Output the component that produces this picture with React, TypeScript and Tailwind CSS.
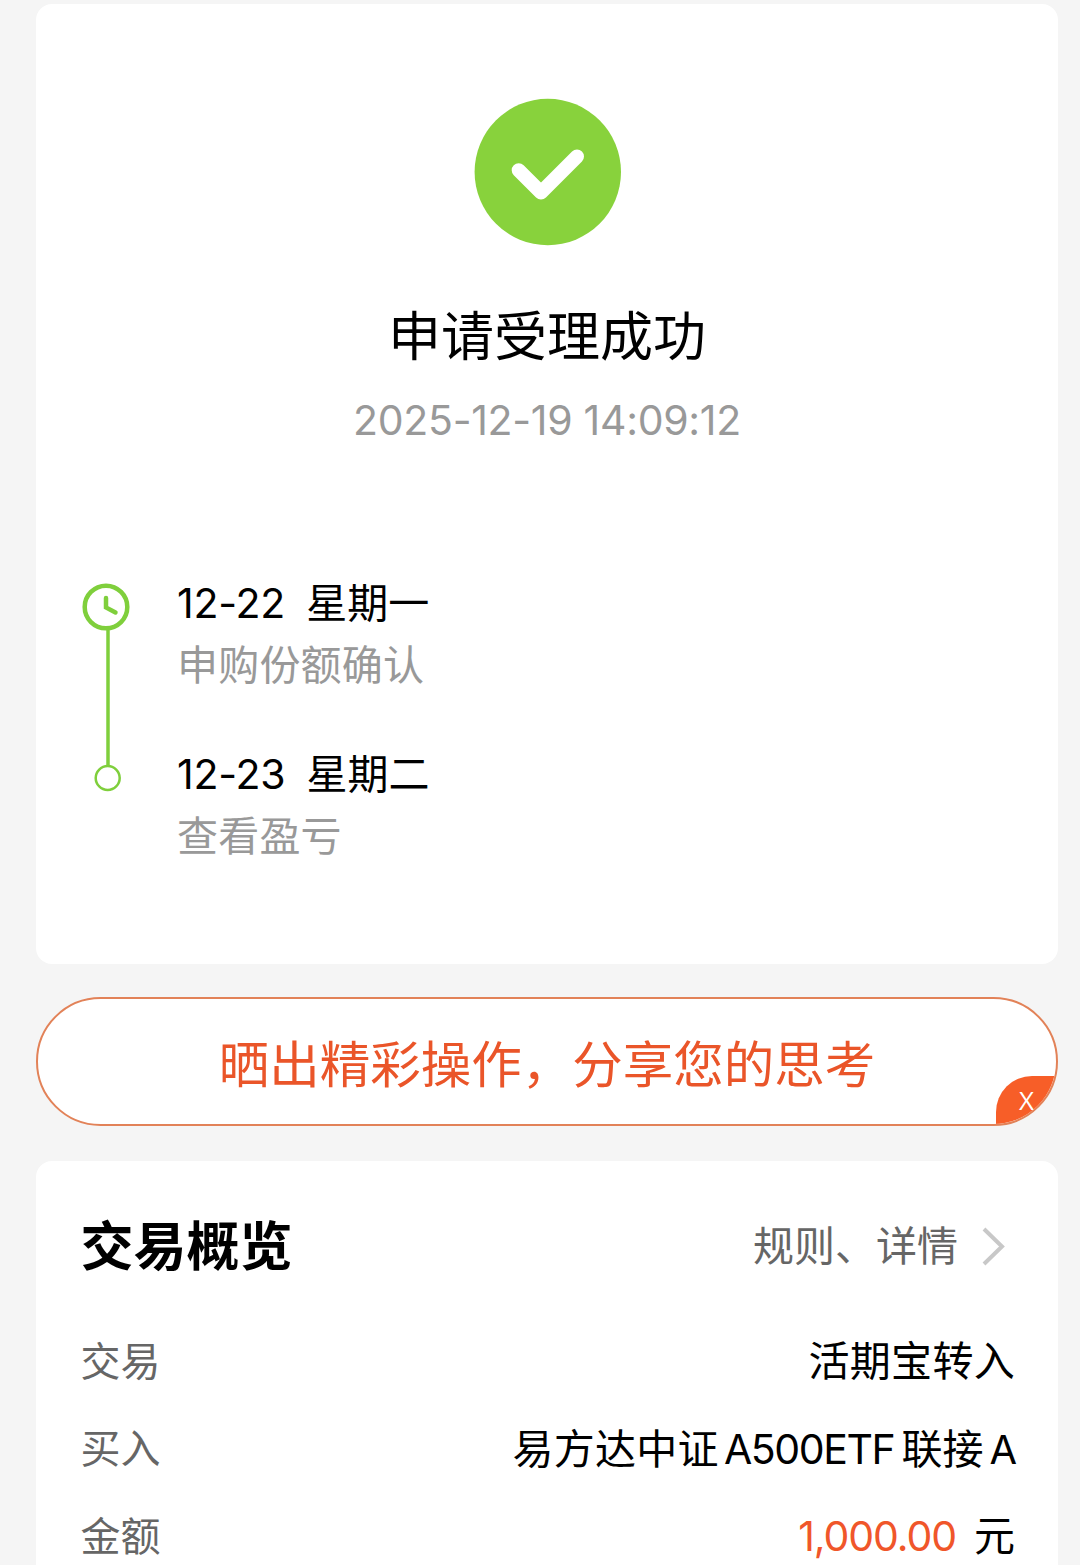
import type { ReactNode } from 'react';

interface Step {
  date: string;
  weekday: string;
  label: string;
}

const steps: Step[] = [
  { date: '12-22', weekday: '星期一', label: '申购份额确认' },
  { date: '12-23', weekday: '星期二', label: '查看盈亏' },
];

function SuccessIcon() {
  return (
    <svg viewBox="0 0 148 148" className="ml-[2px] h-[148px] w-[148px]" fill="none">
      <circle cx="73.8" cy="74" r="73.2" fill="#88d23c" />
      <path
        d="M44.7 72.3 L67 94.5 L103 58.5"
        stroke="#fff"
        strokeWidth="14"
        strokeLinecap="round"
        strokeLinejoin="round"
      />
    </svg>
  );
}

function Timeline() {
  return (
    <svg viewBox="0 0 50 212" className="h-[212px] w-[50px] shrink-0" fill="none" stroke="#7fcf3c">
      <circle cx="25" cy="25" r="21.3" strokeWidth="4.5" />
      <path d="M25 16V25.5L34.5 30.5" strokeWidth="4.5" strokeLinecap="round" />
      <path d="M27 48V183" strokeWidth="3.5" />
      <circle cx="26.7" cy="196" r="12" strokeWidth="2.5" />
    </svg>
  );
}

function Row({ label, children }: { label: string; children: ReactNode }) {
  return (
    <div className="flex h-[87.5px] items-center justify-between text-[41px]">
      <span className="text-[40px] text-[#666]">{label}</span>
      <span className="whitespace-nowrap text-black">{children}</span>
    </div>
  );
}

export default function App() {
  return (
    <main className="h-[1565px] w-[1080px] overflow-hidden bg-[#f5f5f5] pr-[22px] pl-9 pt-1 font-[Inter,'Noto_Sans_CJK_SC',sans-serif] font-normal">
      <section className="flex h-[960px] flex-col items-center rounded-2xl bg-white pt-[94px]">
        <SuccessIcon />
        <h1 className="mt-[53px] text-[53px] leading-[76px] text-black">申请受理成功</h1>
        <p className="mt-[20px] text-[41px] leading-[50px] tracking-[-0.3px] text-[#999]">
          2025-12-19 14:09:12
        </p>

        <div className="mt-[137px] flex w-full pl-[45px]">
          <Timeline />
          <ul className="-mt-px ml-[46px]">
            {steps.map((s) => (
              <li key={s.date} className="h-[171px]">
                <p className="flex gap-[21px] text-[41px] leading-[44px] text-black">
                  <span className="tracking-[-0.2px]">{s.date}</span>
                  <span>{s.weekday}</span>
                </p>
                <p className="mt-[18px] text-[41px] leading-[44px] tracking-[0.2px] text-[#999]">{s.label}</p>
              </li>
            ))}
          </ul>
        </div>
      </section>

      <button className="relative mt-[33px] flex h-[129px] w-full items-center justify-center overflow-hidden rounded-full border-2 border-[#e28258] bg-white pt-[6px] text-[50.5px] text-[#ea5529]">
        晒出精彩操作，分享您的思考
        <span className="absolute -right-px -bottom-px h-[49px] w-[61px] rounded-tl-[36px] bg-[#f75e28] font-['Open_Sans',sans-serif] text-center text-[26px] leading-[48px] text-white">
          X
        </span>
      </button>

      <section className="mt-[35px] h-[440px] rounded-2xl bg-white pr-[43px] pl-[44.5px] pt-[41px]">
        <div className="flex h-[90px] items-center justify-between">
          <h2 className="pt-[2px] text-[53px] font-bold text-black">交易概览</h2>
          <a className="flex items-center text-[41px] text-[#666]">
            规则、详情
            <svg viewBox="0 0 24 40" className="mr-[9px] ml-[24px] h-10 w-6" fill="none">
              <path d="M2 2L20 19.5L2 37" stroke="#c8c8c8" strokeWidth="4" />
            </svg>
          </a>
        </div>
        <div className="mt-[26px]">
          <Row label="交易">
            <span className="tracking-[0.3px]">活期宝转入</span>
          </Row>
          <Row label="买入">
            <span className="tracking-[0.3px]">易方达中证</span>
            <span className="mr-[7px] ml-[5px] tracking-[-1.4px]">A500ETF</span>
            联接
            <span className="ml-[6px] text-[40px] tracking-[-2px]">A</span>
          </Row>
          <Row label="金额">
            <span className="mr-[18px] tracking-[-1.1px] text-[#f0562a]">1,000.00</span>元
          </Row>
        </div>
      </section>
    </main>
  );
}
